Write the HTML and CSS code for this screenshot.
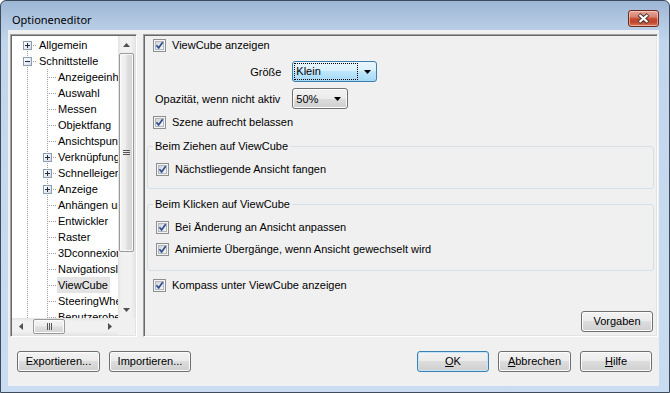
FILE: index.html
```html
<!DOCTYPE html>
<html lang="de">
<head>
<meta charset="utf-8">
<title>Optioneneditor</title>
<link rel="stylesheet" href="styles.css">
</head>
<body>
<svg class="defs" width="0" height="0" aria-hidden="true">
  <defs>
    <linearGradient id="cbg" x1="0" y1="0" x2="1" y2="1">
      <stop offset="0" stop-color="#cfd3d8"/>
      <stop offset="1" stop-color="#f7f7f7"/>
    </linearGradient>
    <linearGradient id="expg" x1="0" y1="0" x2="1" y2="1">
      <stop offset="0" stop-color="#ffffff"/>
      <stop offset="1" stop-color="#d6dbe2"/>
    </linearGradient>
  </defs>
</svg>
<div class="window">
  <div class="titlebar">
    <span class="title">Optioneneditor</span>
    <div class="close">
      <svg width="29" height="15" viewBox="0 0 29 15"><path d="M10 3.5 L19 11.5 M19 3.5 L10 11.5" stroke="#4b3430" stroke-width="4"/><path d="M10.5 4 L18.5 11 M18.5 4 L10.5 11" stroke="#ffffff" stroke-width="2.2"/></svg>
    </div>
  </div>
  <div class="client">
    <div class="main">
      <div class="tree">
        <div class="tree-body">
          <div class="tree-view">
            <div class="row l0"><span class="joint"><svg class="exp" width="9" height="9" viewBox="0 0 9 9"><rect x=".5" y=".5" width="8" height="8" fill="url(#expg)" stroke="#8d9db1"/><path d="M2 4.5h5M4.5 2v5" stroke="#1d2f4a"/></svg></span><span class="t">Allgemein</span></div>
            <div class="row l0"><span class="joint"><svg class="exp" width="9" height="9" viewBox="0 0 9 9"><rect x=".5" y=".5" width="8" height="8" fill="url(#expg)" stroke="#8d9db1"/><path d="M2 4.5h5" stroke="#1d2f4a"/></svg></span><span class="t">Schnittstelle</span></div>
            <div class="children">
              <div class="row l1"><span class="joint"></span><span class="t">Anzeigeeinheiten</span></div>
              <div class="row l1"><span class="joint"></span><span class="t">Auswahl</span></div>
              <div class="row l1"><span class="joint"></span><span class="t">Messen</span></div>
              <div class="row l1"><span class="joint"></span><span class="t">Objektfang</span></div>
              <div class="row l1"><span class="joint"></span><span class="t">Ansichtspunkt</span></div>
              <div class="row l1"><span class="joint"><svg class="exp" width="9" height="9" viewBox="0 0 9 9"><rect x=".5" y=".5" width="8" height="8" fill="url(#expg)" stroke="#8d9db1"/><path d="M2 4.5h5M4.5 2v5" stroke="#1d2f4a"/></svg></span><span class="t">Verknüpfungen</span></div>
              <div class="row l1"><span class="joint"><svg class="exp" width="9" height="9" viewBox="0 0 9 9"><rect x=".5" y=".5" width="8" height="8" fill="url(#expg)" stroke="#8d9db1"/><path d="M2 4.5h5M4.5 2v5" stroke="#1d2f4a"/></svg></span><span class="t">Schnelleigenschaften</span></div>
              <div class="row l1"><span class="joint"><svg class="exp" width="9" height="9" viewBox="0 0 9 9"><rect x=".5" y=".5" width="8" height="8" fill="url(#expg)" stroke="#8d9db1"/><path d="M2 4.5h5M4.5 2v5" stroke="#1d2f4a"/></svg></span><span class="t">Anzeige</span></div>
              <div class="row l1"><span class="joint"></span><span class="t">Anhängen und Verschieben</span></div>
              <div class="row l1"><span class="joint"></span><span class="t">Entwickler</span></div>
              <div class="row l1"><span class="joint"></span><span class="t">Raster</span></div>
              <div class="row l1"><span class="joint"></span><span class="t">3Dconnexion</span></div>
              <div class="row l1"><span class="joint"></span><span class="t">Navigationsleiste</span></div>
              <div class="row l1 sel"><span class="joint"></span><span class="t">ViewCube</span></div>
              <div class="row l1"><span class="joint"></span><span class="t">SteeringWheels</span></div>
              <div class="row l1"><span class="joint"></span><span class="t">Benutzeroberfläche</span></div>
            </div>
          </div>
          <div class="vscroll">
            <div class="sb-btn"><svg width="7" height="4" viewBox="0 0 7 4"><path d="M3.5 0 L7 4 H0 Z" fill="#505050"/></svg></div>
            <div class="vthumb"><svg width="7" height="5" viewBox="0 0 7 5"><path d="M0 .5h7M0 2.5h7M0 4.5h7" stroke="#555"/></svg></div>
            <div class="track"></div>
            <div class="sb-btn"><svg width="7" height="4" viewBox="0 0 7 4"><path d="M0 0 H7 L3.5 4 Z" fill="#505050"/></svg></div>
          </div>
        </div>
        <div class="hrow">
          <div class="hscroll">
            <div class="sb-btn h"><svg width="4" height="7" viewBox="0 0 4 7"><path d="M4 0 V7 L0 3.5 Z" fill="#505050"/></svg></div>
            <div class="hthumb"><svg width="5" height="7" viewBox="0 0 5 7"><path d="M.5 0v7M2.5 0v7M4.5 0v7" stroke="#555"/></svg></div>
            <div class="track"></div>
            <div class="sb-btn h"><svg width="4" height="7" viewBox="0 0 4 7"><path d="M0 0 V7 L4 3.5 Z" fill="#505050"/></svg></div>
          </div>
          <div class="corner"></div>
        </div>
      </div>

      <div class="panel">
        <label class="check first"><svg class="cb" width="13" height="13" viewBox="0 0 13 13"><rect x=".5" y=".5" width="12" height="12" fill="#f4f4f4" stroke="#8e8f8f"/><rect x="2.5" y="2.5" width="8" height="8" fill="url(#cbg)" stroke="#b3b7bd"/><path d="M3.4 6.3 L5.6 8.9 L9.7 3.2" fill="none" stroke="#2d4d8e" stroke-width="1.7"/></svg>ViewCube anzeigen</label>
        <div class="form">
          <span class="lbl lbl-right">Größe</span>
          <div class="combo combo-focus combo-size"><span class="focusbox">Klein</span><svg class="arr" width="7" height="4" viewBox="0 0 7 4"><path d="M0 0 H7 L3.5 4 Z" fill="#000"/></svg></div>
          <span class="lbl">Opazität, wenn nicht aktiv</span>
          <div class="combo combo-opacity"><span class="cval">50%</span><svg class="arr" width="7" height="4" viewBox="0 0 7 4"><path d="M0 0 H7 L3.5 4 Z" fill="#000"/></svg></div>
        </div>
        <label class="check scene"><svg class="cb" width="13" height="13" viewBox="0 0 13 13"><rect x=".5" y=".5" width="12" height="12" fill="#f4f4f4" stroke="#8e8f8f"/><rect x="2.5" y="2.5" width="8" height="8" fill="url(#cbg)" stroke="#b3b7bd"/><path d="M3.4 6.3 L5.6 8.9 L9.7 3.2" fill="none" stroke="#2d4d8e" stroke-width="1.7"/></svg>Szene aufrecht belassen</label>

        <fieldset class="group g1">
          <legend>Beim Ziehen auf ViewCube</legend>
          <label class="check"><svg class="cb" width="13" height="13" viewBox="0 0 13 13"><rect x=".5" y=".5" width="12" height="12" fill="#f4f4f4" stroke="#8e8f8f"/><rect x="2.5" y="2.5" width="8" height="8" fill="url(#cbg)" stroke="#b3b7bd"/><path d="M3.4 6.3 L5.6 8.9 L9.7 3.2" fill="none" stroke="#2d4d8e" stroke-width="1.7"/></svg>Nächstliegende Ansicht fangen</label>
        </fieldset>

        <fieldset class="group g2">
          <legend>Beim Klicken auf ViewCube</legend>
          <label class="check"><svg class="cb" width="13" height="13" viewBox="0 0 13 13"><rect x=".5" y=".5" width="12" height="12" fill="#f4f4f4" stroke="#8e8f8f"/><rect x="2.5" y="2.5" width="8" height="8" fill="url(#cbg)" stroke="#b3b7bd"/><path d="M3.4 6.3 L5.6 8.9 L9.7 3.2" fill="none" stroke="#2d4d8e" stroke-width="1.7"/></svg>Bei Änderung an Ansicht anpassen</label>
          <label class="check"><svg class="cb" width="13" height="13" viewBox="0 0 13 13"><rect x=".5" y=".5" width="12" height="12" fill="#f4f4f4" stroke="#8e8f8f"/><rect x="2.5" y="2.5" width="8" height="8" fill="url(#cbg)" stroke="#b3b7bd"/><path d="M3.4 6.3 L5.6 8.9 L9.7 3.2" fill="none" stroke="#2d4d8e" stroke-width="1.7"/></svg>Animierte Übergänge, wenn Ansicht gewechselt wird</label>
        </fieldset>

        <label class="check compass"><svg class="cb" width="13" height="13" viewBox="0 0 13 13"><rect x=".5" y=".5" width="12" height="12" fill="#f4f4f4" stroke="#8e8f8f"/><rect x="2.5" y="2.5" width="8" height="8" fill="url(#cbg)" stroke="#b3b7bd"/><path d="M3.4 6.3 L5.6 8.9 L9.7 3.2" fill="none" stroke="#2d4d8e" stroke-width="1.7"/></svg>Kompass unter ViewCube anzeigen</label>

        <button class="btn btn-defaults" type="button">Vorgaben</button>
      </div>
    </div>

    <div class="footer">
      <button class="btn btn-export" type="button">Exportieren...</button>
      <button class="btn btn-import" type="button">Importieren...</button>
      <span class="spacer"></span>
      <button class="btn btn-default btn-ok" type="button"><u>O</u>K</button>
      <button class="btn btn-cancel" type="button"><u>A</u>bbrechen</button>
      <button class="btn btn-help" type="button"><u>H</u>ilfe</button>
    </div>
  </div>
</div>
</body>
</html>
```
FILE: styles.css
```css
* { box-sizing: border-box; }
html, body { margin: 0; padding: 0; }
body {
  background: #ffffff;
  font-family: "Liberation Sans", Arial, sans-serif;
  font-size: 11px;
  color: #000;
}
.defs { position: absolute; width: 0; height: 0; }

.window {
  width: 670px;
  height: 393px;
  border: 1px solid #3d4b5d;
  border-radius: 6px 6px 0 0;
  background: linear-gradient(to bottom, #9db6d4 0, #b3c9e3 22px, #c1d5ec 40px, #c6d9ef 200px, #cadcf1 100%);
  display: flex;
  flex-direction: column;
  padding: 0 10px 6px 7px;
  overflow: hidden;
}

.titlebar {
  height: 29px;
  flex: none;
  display: flex;
  justify-content: space-between;
  align-items: flex-start;
}
.title {
  font-family: "Noto Sans", "Liberation Sans", sans-serif;
  font-size: 11px;
  line-height: 15px;
  margin: 11px 0 0 4px;
  color: #000;
}
.close {
  margin-top: 9px;
  width: 31px;
  height: 17px;
  border: 1px solid #6e2a20;
  border-radius: 3px;
  background: linear-gradient(to bottom, #e9a99a 0%, #d88070 40%, #c4492f 52%, #c0462f 75%, #d8795c 100%);
  box-shadow: inset 0 0 0 1px rgba(255, 220, 210, 0.55);
  display: flex;
  align-items: center;
  justify-content: center;
}

.client {
  flex: 1;
  background: #f0f0f0;
  display: flex;
  flex-direction: column;
}

.main {
  display: flex;
  gap: 6px;
  padding: 4px 1px 0 2px;
}

.tree, .panel {
  height: 303px;
  border: 1px solid;
  border-color: #a0a0a0 #ffffff #ffffff #a0a0a0;
  box-shadow: inset 1px 1px 0 #696969, inset -1px -1px 0 #e3e3e3;
  padding: 1px;
}
.tree {
  width: 127px;
  flex: none;
  display: flex;
  flex-direction: column;
}
.tree-body {
  display: flex;
  height: 282px;
}
.tree-view {
  width: 106px;
  height: 282px;
  overflow: hidden;
  padding-top: 1px;
  background:
    repeating-linear-gradient(to bottom, #a0a0a0 0 1px, transparent 1px 2px) 15px 9px / 1px 100% no-repeat,
    #ffffff;
}
.children {
  background: repeating-linear-gradient(to bottom, #a0a0a0 0 1px, transparent 1px 2px) 35px 0 / 1px 100% no-repeat;
}
.row {
  height: 16px;
  display: flex;
  align-items: flex-start;
  white-space: nowrap;
}
.l0 { padding-left: 6px; }
.l1 { padding-left: 26px; }
.joint {
  width: 19px;
  height: 16px;
  flex: none;
  display: flex;
  justify-content: center;
  background: repeating-linear-gradient(to right, #a0a0a0 0 1px, transparent 1px 2px) 9px 8px / 10px 1px no-repeat;
}
.exp { margin-top: 4px; display: block; }
.t {
  line-height: 16px;
  height: 16px;
  padding: 0 2px 0 1px;
}
.l0 .t { margin-left: 1px; }
.sel .t { background: #e4e4e4; }

.vscroll {
  width: 17px;
  display: flex;
  flex-direction: column;
  background: linear-gradient(to right, #e2e2e2 0, #f1f1f1 3px, #f1f1f1 13px, #e6e6e6 100%);
}
.sb-btn {
  height: 17px;
  flex: none;
  display: flex;
  align-items: center;
  justify-content: center;
}
.sb-btn.h { width: 17px; height: 17px; }
.vthumb {
  height: 199px;
  margin: 0 1px;
  border: 1px solid #999999;
  border-radius: 2px;
  background: linear-gradient(to right, #f5f5f5 0%, #ececec 45%, #dedede 55%, #d4d4d4 100%);
  box-shadow: inset 0 0 0 1px #fbfbfb;
  display: flex;
  align-items: center;
  justify-content: center;
}
.track { flex: 1; }
.hrow {
  display: flex;
  height: 17px;
}
.hscroll {
  width: 106px;
  display: flex;
  align-items: center;
  background: linear-gradient(to bottom, #e2e2e2 0, #f1f1f1 3px, #f1f1f1 13px, #e6e6e6 100%);
}
.hthumb {
  width: 32px;
  height: 15px;
  margin-left: 4px;
  border: 1px solid #999999;
  border-radius: 2px;
  background: linear-gradient(to bottom, #f5f5f5 0%, #ececec 45%, #dedede 55%, #d4d4d4 100%);
  box-shadow: inset 0 0 0 1px #fbfbfb;
  display: flex;
  align-items: center;
  justify-content: center;
}
.corner { width: 17px; background: #f0f0f0; }

.panel {
  flex: 1;
  display: flex;
  flex-direction: column;
  align-items: flex-start;
}
.check {
  display: flex;
  align-items: center;
  gap: 6px;
  height: 13px;
  line-height: 13px;
  white-space: nowrap;
}
.cb { display: block; flex: none; }
.first { margin: 3px 0 0 8px; }
.form {
  display: grid;
  grid-template-columns: auto auto;
  column-gap: 12px;
  row-gap: 6px;
  align-items: center;
  margin: 9px 0 0 10px;
}
.lbl { white-space: nowrap; }
.lbl-right { justify-self: end; margin-right: -1px; }
.combo {
  height: 21px;
  border: 1px solid #707070;
  border-radius: 3px;
  display: flex;
  align-items: center;
  justify-content: space-between;
  background: linear-gradient(to bottom, #f2f2f2 0%, #ebebeb 50%, #dddddd 50%, #cfcfcf 100%);
  box-shadow: inset 0 0 0 1px #fcfcfc;
}
.combo-size { width: 85px; padding: 0 5px 0 1px; }
.combo-opacity { width: 56px; padding: 0 6px 0 3px; }
.combo-focus {
  border-color: #3c7fb1;
  background: linear-gradient(to bottom, #eaf6fd 0%, #d9f0fc 50%, #bee6fd 50%, #a7d9f5 100%);
  box-shadow: none;
}
.focusbox {
  width: 64px;
  height: 17px;
  line-height: 15px;
  border: 1px dotted #000;
  padding-left: 1px;
}
.arr { display: block; flex: none; }
.scene { margin: 7px 0 0 8px; }

.group {
  align-self: stretch;
  margin: 10px 2px 0 2px;
  border: 1px solid #d5dfe5;
  border-radius: 3px;
  padding: 10px 8px 12px 8px;
  min-width: 0;
  display: flex;
  flex-direction: column;
  gap: 9px;
}
.group legend {
  padding: 0 2px;
  margin-left: -3px;
  line-height: 14px;
  height: 14px;
}
.g2 { margin-top: 8px; padding-bottom: 14px; }
.compass { margin: 8px 0 0 8px; }

.btn {
  font-family: "Liberation Sans", Arial, sans-serif;
  font-size: 11px;
  color: #000;
  height: 21px;
  padding: 0;
  border: 1px solid #707070;
  border-radius: 3px;
  background: linear-gradient(to bottom, #f2f2f2 0%, #ebebeb 50%, #dddddd 50%, #cfcfcf 100%);
  box-shadow: inset 0 0 0 1px #fcfcfc;
  line-height: 17px;
  text-align: center;
}
.btn u { text-decoration: underline; text-underline-offset: 1px; }
.btn-defaults {
  width: 72px;
  margin: auto 3px 3px 0;
  align-self: flex-end;
}
.btn-default {
  border-color: #3c7fb1;
  box-shadow: inset 0 0 0 1px #c5e6f8;
}

.footer {
  display: flex;
  gap: 9px;
  padding: 14px 7px 0 9px;
}
.spacer { flex: 1; }
.btn-export { width: 83px; }
.btn-import { width: 82px; }
.btn-ok { width: 72px; }
.btn-cancel { width: 73px; }
.btn-help { width: 72px; }
```
